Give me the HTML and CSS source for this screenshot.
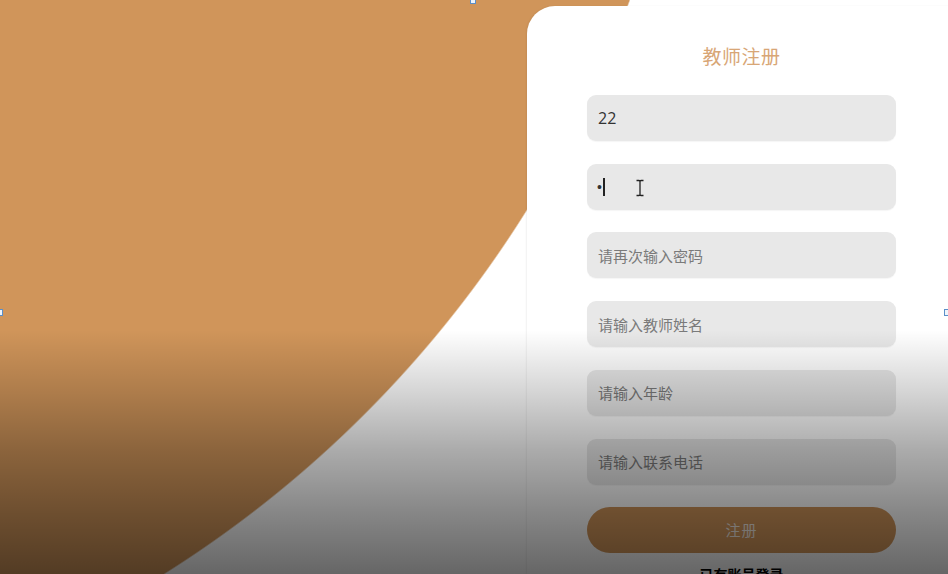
FILE: index.html
```html
<!DOCTYPE html>
<html lang="zh-CN">
<head>
<meta charset="utf-8">
<title>教师注册</title>
<link rel="stylesheet" href="styles.css">
</head>
<body>
<div class="page">
  <div class="spacer"></div>
  <div class="card">
    <form class="form">
      <h1 class="title">教师注册</h1>
      <input class="field field-value" type="text" value="22">
      <div class="field field-pass">
        <span class="dot">•</span><span class="caret"></span>
        <svg class="ibeam" width="10" height="18" viewBox="0 0 10 18"><path d="M1.5 1.5h2.5c.6 0 1 .4 1 1 0-.6.4-1 1-1h2.5M5 2.5v13M1.5 16.5h2.5c.6 0 1-.4 1-1 0 .6.4 1 1 1h2.5" fill="none" stroke="#222" stroke-width="1.3"/></svg>
      </div>
      <input class="field" type="password" placeholder="请再次输入密码">
      <input class="field" type="text" placeholder="请输入教师姓名">
      <input class="field" type="text" placeholder="请输入年龄">
      <input class="field" type="text" placeholder="请输入联系电话">
      <button class="submit" type="button">注册</button>
      <a class="login-link" href="#">已有账号登录</a>
    </form>
  </div>
</div>
<div class="shade"></div>
<span class="handle handle-top"></span>
<span class="handle handle-left"></span>
<span class="handle handle-right"></span>
</body>
</html>
```

FILE: styles.css
```css
html, body {
  margin: 0;
  padding: 0;
}
body {
  width: 948px;
  height: 574px;
  overflow: hidden;
  position: relative;
  font-family: "Noto Sans CJK SC", "Noto Sans", sans-serif;
  background: radial-gradient(circle 1147px at -446px -397px, #d0955a 1146px, #ffffff 1147.5px);
}
.page {
  display: flex;
  height: 574px;
}
.spacer {
  width: 527px;
  flex: none;
}
.card {
  flex: none;
  width: 461px;
  margin-top: 6px;
  background: #ffffff;
  border-top-left-radius: 28px;
  box-shadow: -1px 0 2px rgba(0, 0, 0, 0.06);
  padding: 36px 0 0 60px;
  box-sizing: border-box;
}
.form {
  width: 309px;
  display: flex;
  flex-direction: column;
  align-items: center;
  gap: 22.8px;
}
.title {
  margin: 0 0 2px;
  font-size: 19px;
  line-height: 28px;
  font-weight: 400;
  color: #d8a676;
  letter-spacing: 0.5px;
}
.field {
  width: 309px;
  height: 46px;
  box-sizing: border-box;
  border: none;
  outline: none;
  border-radius: 9px;
  background: #e8e8e8;
  padding: 0 11px;
  font-family: inherit;
  font-size: 15px;
  color: #333;
  box-shadow: 0 1px 1px rgba(0, 0, 0, 0.04);
}
.field::placeholder {
  color: #7a7a7a;
}
.field-value {
  font-family: "Open Sans", "Noto Sans", sans-serif;
  font-size: 16px;
  color: #333;
}
.field-pass {
  position: relative;
  display: flex;
  align-items: center;
}
.dot {
  font-family: "Liberation Sans", sans-serif;
  font-size: 14px;
  color: #333;
  line-height: 1;
  margin-left: -1px;
}
.caret {
  display: inline-block;
  width: 1.5px;
  height: 18px;
  background: #222;
  margin-left: 1.5px;
}
.ibeam {
  position: absolute;
  left: 48px;
  top: 15px;
}
.submit {
  width: 309px;
  height: 46px;
  margin-top: -0.8px;
  border: none;
  border-radius: 23px;
  background: #d0955a;
  color: #f4ece4;
  font-family: inherit;
  font-size: 15px;
  letter-spacing: 1px;
}
.login-link {
  margin-top: -12px;
  font-size: 14px;
  font-weight: 700;
  color: #000;
  text-decoration: none;
}
.shade {
  position: absolute;
  left: 0;
  top: 0;
  width: 948px;
  height: 574px;
  pointer-events: none;
  background: linear-gradient(to bottom,
    rgba(0, 0, 0, 0) 0px,
    rgba(0, 0, 0, 0) 330px,
    rgba(0, 0, 0, 0.16) 390px,
    rgba(0, 0, 0, 0.33) 450px,
    rgba(0, 0, 0, 0.48) 515px,
    rgba(0, 0, 0, 0.6) 574px);
}
.handle {
  position: absolute;
  width: 4px;
  height: 5px;
  background: #eef4fb;
  border: 1px solid #5b8fc8;
}
.handle-top {
  left: 470px;
  top: -3px;
}
.handle-left {
  left: -3px;
  top: 309px;
}
.handle-right {
  left: 944px;
  top: 309px;
}
```
